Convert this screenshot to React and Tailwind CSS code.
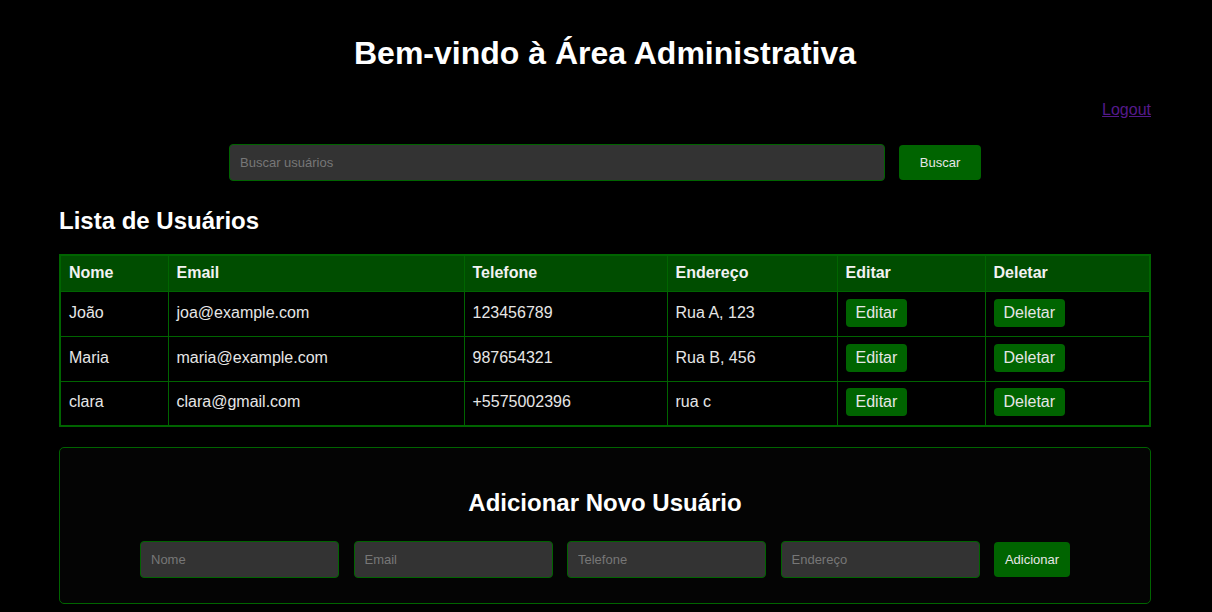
const USERS = [
  { nome: 'João', email: 'joa@example.com', telefone: '123456789', endereco: 'Rua A, 123' },
  { nome: 'Maria', email: 'maria@example.com', telefone: '987654321', endereco: 'Rua B, 456' },
  { nome: 'clara', email: 'clara@gmail.com', telefone: '+5575002396', endereco: 'rua c' },
]

const COLS = ['Nome', 'Email', 'Telefone', 'Endereço', 'Editar', 'Deletar']
const WIDTHS = ['w-[108px]', 'w-[296px]', 'w-[203px]', 'w-[170px]', 'w-[148px]', 'w-[165px]']

function GreenButton({ children, className = '' }) {
  return (
    <button className={`bg-[#006400] text-[#e6e6e6] rounded-[4px] ${className}`}>{children}</button>
  )
}

export default function App() {
  return (
    <div className="min-h-screen bg-black text-white font-['Liberation_Sans',Arial,sans-serif] pl-[59px] pr-[61px] pt-[35px] pb-4">
      <h1 className="text-[32px] leading-[37px] font-bold text-center">Bem-vindo à Área Administrativa</h1>

      <div className="flex justify-end mt-[29px]">
        <a href="#" className="text-[16px] leading-[18px] text-[#551a8b] underline">Logout</a>
      </div>

      {/* busca */}
      <div className="flex justify-center items-center gap-[14px] mt-[25px]">
        <input
          placeholder="Buscar usuários"
          className="w-[656px] h-[37px] bg-[#333333] border border-[#006400] rounded-[4px] px-[10px] text-[13px] text-white placeholder:text-[#777777] outline-none"
        />
        <GreenButton className="w-[82px] h-[35px] text-[13px]">Buscar</GreenButton>
      </div>

      <h2 className="text-[24px] leading-[28px] font-bold mt-[26px]">Lista de Usuários</h2>

      <table className="w-[calc(100%-2px)] table-fixed border-collapse border-2 border-[#006400] mt-[19px] text-[16px]">
        <colgroup>
          {WIDTHS.map((w, i) => (
            <col key={i} className={w} />
          ))}
        </colgroup>
        <thead>
          <tr className="bg-[#004d00] h-[36px]">
            {COLS.map((c) => (
              <th key={c} className="border border-[#006400] px-[8px] text-left font-bold text-[#f2f2f2]">{c}</th>
            ))}
          </tr>
        </thead>
        <tbody>
          {USERS.map((u) => (
            <tr key={u.email} className="h-[45px]">
              <td className="border border-[#006400] px-[8px] pb-[2px] text-[#e6e6e6]">{u.nome}</td>
              <td className="border border-[#006400] px-[8px] pb-[2px] text-[#e6e6e6]">{u.email}</td>
              <td className="border border-[#006400] px-[8px] pb-[2px] text-[#e6e6e6]">{u.telefone}</td>
              <td className="border border-[#006400] px-[8px] pb-[2px] text-[#e6e6e6]">{u.endereco}</td>
              <td className="border border-[#006400] px-[8px] pb-[2px]">
                <GreenButton className="h-[28px] px-[10px] text-[16px] align-middle">Editar</GreenButton>
              </td>
              <td className="border border-[#006400] px-[8px] pb-[2px]">
                <GreenButton className="h-[28px] px-[10px] text-[16px] align-middle">Deletar</GreenButton>
              </td>
            </tr>
          ))}
        </tbody>
      </table>

      {/* novo usuário */}
      <div className="mt-[20px] border border-[#006400] rounded-[5px] bg-[#040404] h-[157px] flex flex-col items-center">
        <h2 className="text-[24px] leading-[28px] font-bold mt-[41px]">Adicionar Novo Usuário</h2>
        <div className="flex items-center gap-[14.5px] mt-[24px]">
          {['Nome', 'Email', 'Telefone', 'Endereço'].map((p) => (
            <input
              key={p}
              placeholder={p}
              className="w-[199px] h-[37px] bg-[#333333] border border-[#006400] rounded-[4px] px-[10px] text-[13px] text-white placeholder:text-[#777777] outline-none"
            />
          ))}
          <GreenButton className="w-[76px] h-[35px] text-[13px]">Adicionar</GreenButton>
        </div>
      </div>
    </div>
  )
}
